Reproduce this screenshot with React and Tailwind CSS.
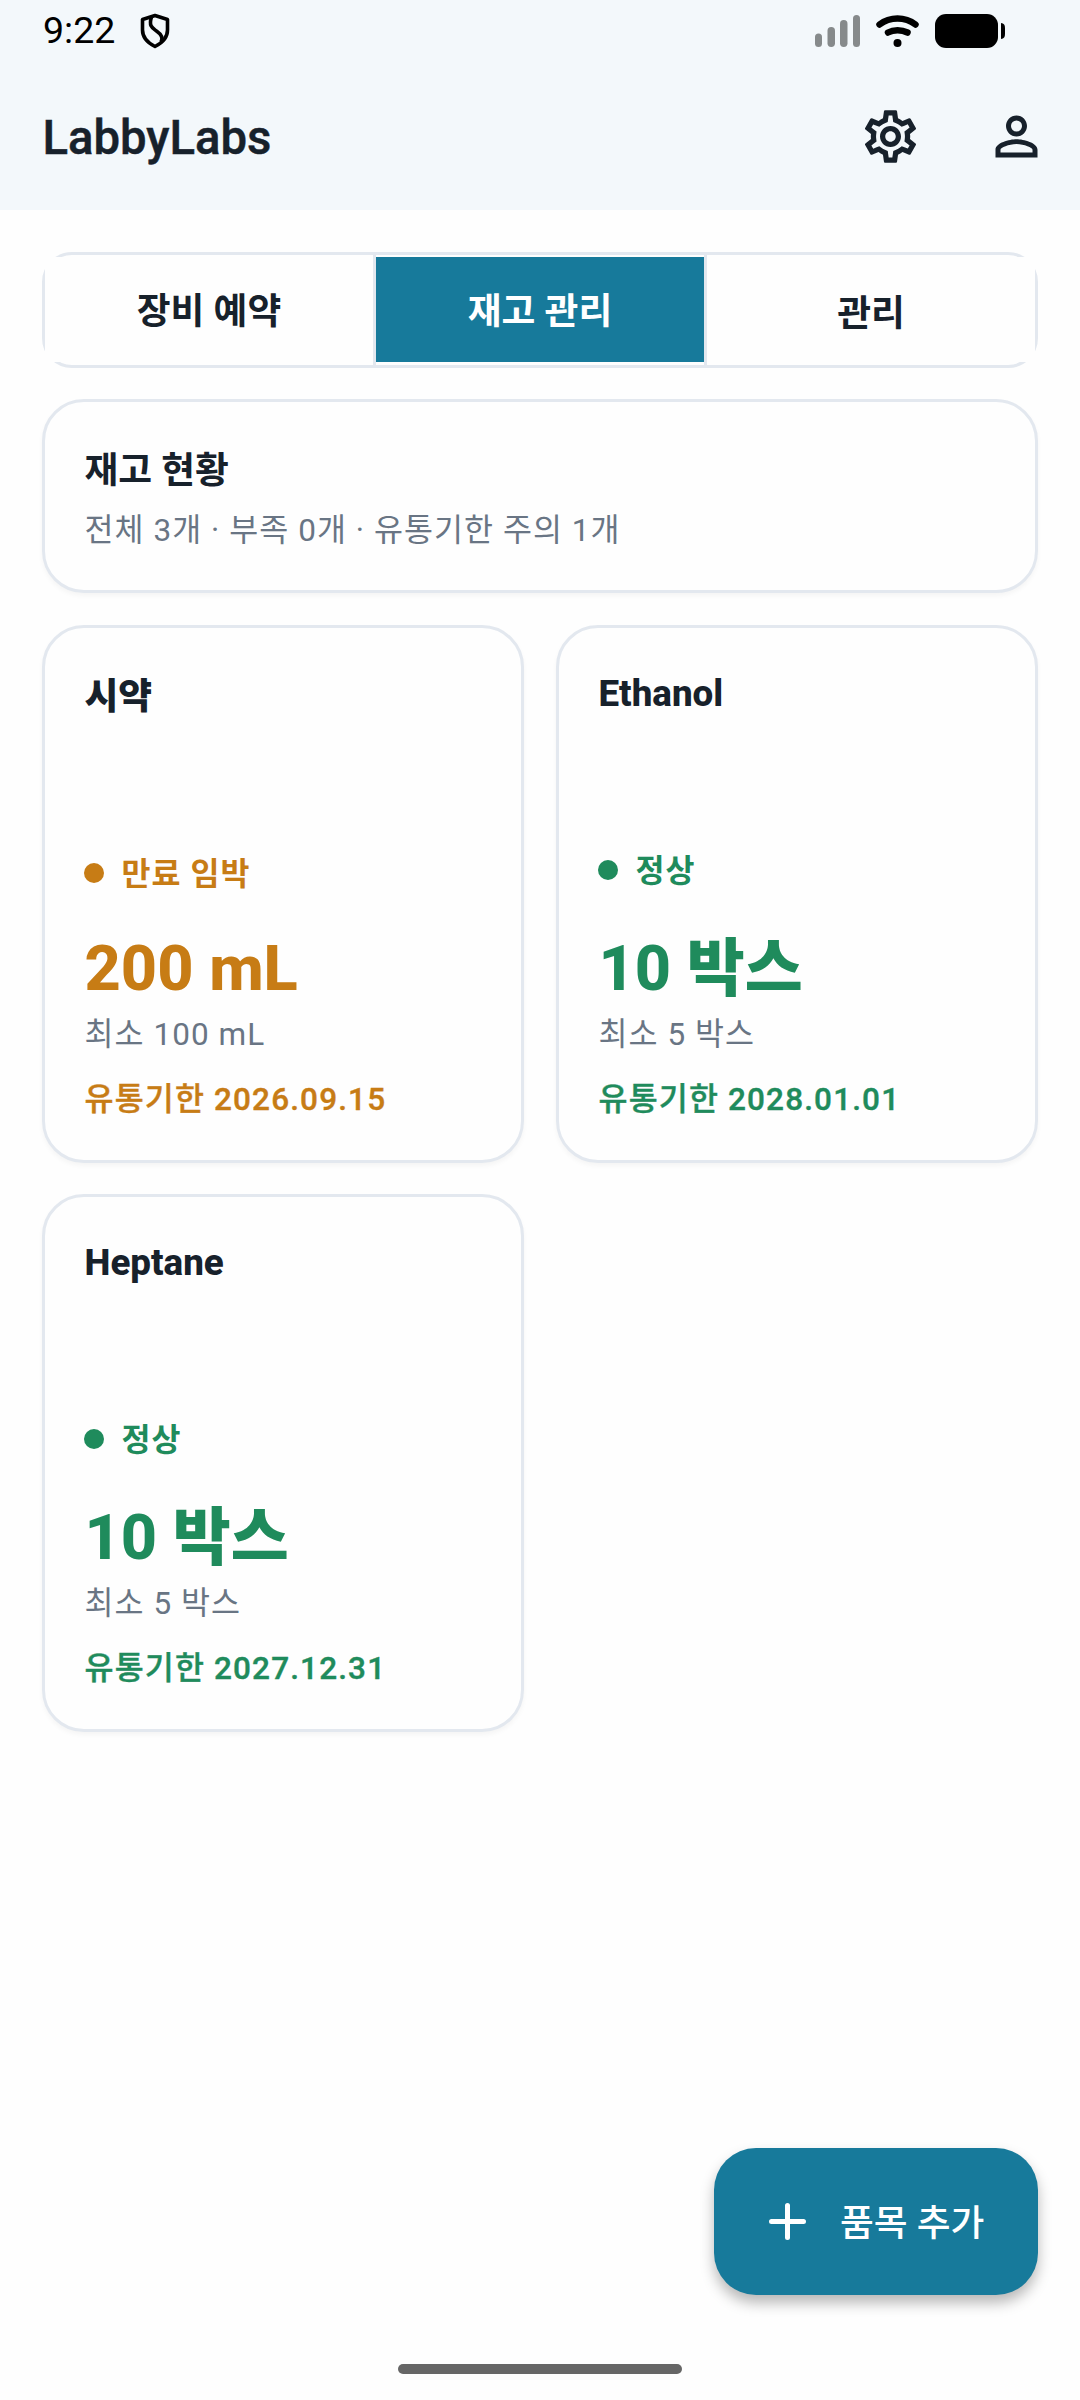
import { useState } from "react";
import { MdOutlineSettings, MdPersonOutline } from "react-icons/md";

const tabs = [
  { id: "booking", label: "장비 예약", offset: "pt-[5px]" },
  { id: "stock", label: "재고 관리", offset: "pt-[5px]" },
  { id: "admin", label: "관리", offset: "pt-[9px]" },
];

const items = [
  {
    name: "시약",
    status: "만료 임박",
    amount: "200 mL",
    minimum: "최소 100 mL",
    expiry: "유통기한 2026.09.15",
    warning: true,
  },
  {
    name: "Ethanol",
    status: "정상",
    amount: "10 박스",
    minimum: "최소 5 박스",
    expiry: "유통기한 2028.01.01",
    warning: false,
  },
  {
    name: "Heptane",
    status: "정상",
    amount: "10 박스",
    minimum: "최소 5 박스",
    expiry: "유통기한 2027.12.31",
    warning: false,
  },
];

function ShieldIcon() {
  return (
    <svg width="32" height="36" viewBox="0 0 32 36" fill="none" stroke="black">
      <path
        d="M16 2.500 L28.500 6.500 V17 C28.500 24.500 23 30 16 33.500 C9 30 3.500 24.500 3.500 17 V6.500 Z"
        strokeWidth="3.600"
        strokeLinejoin="round"
      />
      <path
        d="M12.500 4 C9.500 13.500 13.500 15 17.500 18 C22.500 21.500 24.500 25 22 29"
        strokeWidth="3.600"
      />
    </svg>
  );
}

function StatusBar() {
  return (
    <div className="flex h-[60px] items-start justify-between pl-[42px] pr-[75px]">
      <div className="flex items-start">
        <span className="mt-[9px] w-[97px] pl-px text-[37.5px] leading-[42px] text-black">
          9:22
        </span>
        <div className="mt-[13px]">
          <ShieldIcon />
        </div>
      </div>
      <div className="mt-[14px] flex items-start">
        <svg width="45" height="34" viewBox="0 0 45 34" fill="#868a8b">
          <rect x="0" y="19.500" width="7" height="13.500" rx="3.500" />
          <rect x="12.500" y="13" width="7.500" height="20" rx="3.700" />
          <rect x="25" y="6" width="7.500" height="27" rx="3.700" />
          <rect x="38" y="1" width="7" height="32" rx="3.500" />
        </svg>
        <svg
          className="ml-4"
          width="43"
          height="34"
          viewBox="0 0 43 34"
          fill="none"
          stroke="black"
          strokeWidth="6.500"
          strokeLinecap="round"
        >
          <path d="M3.500 10.500 C14 2.500 29 2.500 39.500 10.500" />
          <path d="M12 18.500 C17.500 15.500 25.500 15.500 31.500 18.500" />
          <circle cx="21.500" cy="29" r="4" fill="black" stroke="none" />
        </svg>
        <svg className="ml-4" width="70" height="34" viewBox="0 0 70 34">
          <rect width="63" height="34" rx="11" />
          <path d="M66 9 C69 9.500 70 11 70 14 V20 C70 23 69 24.500 66 25 Z" />
        </svg>
      </div>
    </div>
  );
}

function Header() {
  return (
    <header className="h-[210px] bg-[#f3f8fb]">
      <StatusBar />
      <div className="flex h-[153px] items-center justify-between pl-[42.5px] pr-8">
        <h1 className="pt-[3px] text-[47.25px] font-medium leading-[60px] [-webkit-text-stroke:0.5px_#17212b]">
          LabbyLabs
        </h1>
        <div className="flex items-center gap-[63px]">
          <MdOutlineSettings size={63} />
          <MdPersonOutline size={63} />
        </div>
      </div>
    </header>
  );
}

function Tabs({ active, onChange }) {
  return (
    <div className="grid h-[116px] grid-cols-[328px_331px_1fr] rounded-[30px] border-[3px] border-[#e3e8ef]">
      {tabs.map((tab) => (
        <div
          key={tab.id}
          className="border-l-[3px] border-[#e3e8ef] pb-[3px] pt-[2px] first:border-l-0"
        >
          <button
            onClick={() => onChange(tab.id)}
            className={`flex h-full w-full items-center justify-center text-[36.75px] font-bold leading-[48px] ${
              tab.offset
            } ${tab.id === active ? "bg-[#177a9b] text-white" : "bg-[#fefefe]"}`}
          >
            {tab.label}
          </button>
        </div>
      ))}
    </div>
  );
}

function ItemCard({ item }) {
  const color = item.warning ? "text-[#c77c15]" : "text-[#1f8b5c]";

  return (
    <div
      className={`h-[538px] rounded-[42px] border-[3px] border-[#e3e8ef] bg-[#fefefe] px-[39.5px] shadow-[0_3px_5px_rgba(0,0,0,0.04)] ${
        item.warning ? "pt-[45px]" : "pt-[42px]"
      }`}
    >
      <h3 className="h-[181px] text-[36.75px] font-extrabold leading-[48px]">
        {item.name}
      </h3>
      <div className={`flex items-center gap-[17.5px] ${color}`}>
        <span className="-ml-[0.5px] mb-1 h-5 w-5 rounded-full bg-current" />
        <span className="text-[31.5px] font-bold leading-[42px] tracking-[1.05px]">
          {item.status}
        </span>
      </div>
      <p
        className={`text-[63px] font-extrabold leading-[72px] ${
          item.warning ? "mt-[37px]" : "mt-10"
        } ${color}`}
      >
        {item.amount}
      </p>
      <p className="mt-[9px] text-[31.5px] leading-[42px] tracking-[1.05px] text-[#697584]">
        {item.minimum}
      </p>
      <p
        className={`mt-[23px] text-[31.5px] font-medium leading-[42px] tracking-[1.15px] [-webkit-text-stroke:0.4px_currentColor] ${color}`}
      >
        {item.expiry}
      </p>
    </div>
  );
}

function App() {
  const [activeTab, setActiveTab] = useState("stock");

  return (
    <div className="flex h-[2400px] w-[1080px] flex-col bg-[#fefefe] font-['Roboto','Noto_Sans_CJK_KR',sans-serif] text-[#17212b]">
      <Header />
      <main className="flex-1 px-[42px] pt-[42px]">
        <Tabs active={activeTab} onChange={setActiveTab} />
        <section className="mt-[31px] h-[194px] rounded-[42px] border-[3px] border-[#e3e8ef] bg-[#fefefe] px-[39.5px] pt-[45px] shadow-[0_3px_5px_rgba(0,0,0,0.04)]">
          <h2 className="text-[36.75px] font-bold leading-[48px]">재고 현황</h2>
          <p className="mt-[15px] text-[31.5px] leading-[42px] tracking-[1.05px] text-[#697584]">
            전체 3개 · 부족 0개 · 유통기한 주의 1개
          </p>
        </section>
        <section className="mt-8 grid grid-cols-2 gap-x-8 gap-y-[31px]">
          {items.map((item) => (
            <ItemCard key={item.name} item={item} />
          ))}
        </section>
      </main>
      <div className="flex justify-end pr-[42px]">
        <button className="flex h-[147px] w-[324px] items-center rounded-[42px] bg-[#177a9b] pl-[55px] text-white shadow-[0_8px_14px_rgba(0,0,0,0.28)]">
          <svg width="37" height="37" viewBox="0 0 37 37" stroke="white" strokeWidth="5" strokeLinecap="round">
            <path d="M18.500 2.500 V34.500 M2.500 18.500 H34.500" />
          </svg>
          <span className="ml-[34px] pt-[5px] text-[36.75px] font-medium leading-[48px]">
            품목 추가
          </span>
        </button>
      </div>
      <footer className="flex h-[105px] justify-center pt-[69px]">
        <div className="h-[10px] w-[284px] rounded-full bg-[#666666]" />
      </footer>
    </div>
  );
}

export default App;
